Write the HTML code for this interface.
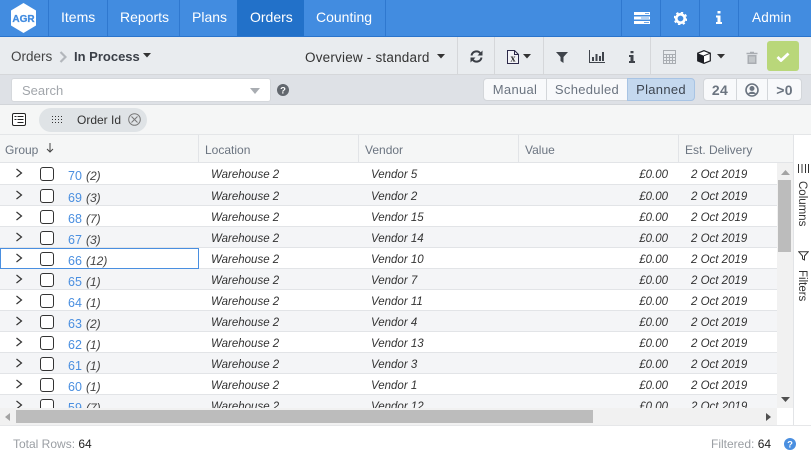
<!DOCTYPE html>
<html><head><meta charset="utf-8">
<style>
html,body{margin:0;padding:0}
body{width:811px;height:455px;overflow:hidden;position:relative;background:#fff;font-family:"Liberation Sans",sans-serif;color:#333}
.a,.t{position:absolute}
.t{white-space:nowrap}
.nav{color:#fff;font-size:14px;top:9px}
.sep{position:absolute;width:1px;background:#2f78cf;top:0;height:36px}
.tsep{position:absolute;width:1px;background:#d5d7da;top:37px;height:37px}
.hd{font-size:12px;color:#6b7480;top:143px}
.hsep{position:absolute;width:1px;background:#e2e4e7;top:135px;height:27px}
.row{position:absolute;left:0;width:777px;height:20px;border-bottom:1px solid #e2e4e7;overflow:hidden}
.row .t{font-size:11.5px;font-style:italic;top:6px;color:#333}
.row .id{font-style:normal;font-size:12.5px;color:#4a8fe0;left:68px;top:6px}
.row .ct{left:86px;top:6px;font-size:12px;color:#444}
.row .cb{position:absolute;left:40px;top:4px;width:12px;height:12px;border:1px solid #333;border-radius:3px;background:#fff}
.row svg{position:absolute;left:15px;top:5px}
.seg{position:absolute;top:78px;height:23px;background:#f8f9fb;border:1px solid #d3d6da;box-sizing:border-box;font-size:13px;color:#6b7480;text-align:center;line-height:22px;letter-spacing:.3px}
</style></head><body>

<div class="a" style="left:0;top:0;width:811px;height:36px;background:#428ce0"></div>
<div class="a" style="left:0;top:36px;width:811px;height:1px;background:#2a74cc"></div>
<div class="a" style="left:237px;top:0;width:67px;height:36px;background:#2271c9"></div>
<div class="sep" style="left:48px"></div><div class="sep" style="left:107px"></div><div class="sep" style="left:179px"></div><div class="sep" style="left:385px"></div>
<div class="sep" style="left:621px"></div><div class="sep" style="left:660px"></div><div class="sep" style="left:699px"></div><div class="sep" style="left:738px"></div>

<svg class="a" style="left:11px;top:3px" width="25" height="30" viewBox="0 0 25 30"><path d="M12.500 0 L25 7.500 V22.500 L12.500 30 L0 22.500 V7.500Z" fill="#fff"/><text x="12.500" y="18.800" font-family="Liberation Sans" font-size="10" font-weight="bold" fill="#428ce0" stroke="#428ce0" stroke-width=".3" text-anchor="middle">AGR</text></svg>
<div class="t nav" style="left:61px">Items</div>
<div class="t nav" style="left:120px">Reports</div>
<div class="t nav" style="left:192px">Plans</div>
<div class="t nav" style="left:250px">Orders</div>
<div class="t nav" style="left:316px">Counting</div>
<div class="t nav" style="left:752px;font-size:13.5px;top:10px;letter-spacing:.25px">Admin</div>
<svg class="a" style="left:634px;top:12px" width="16" height="12"><path d="M0 0h16v3H0zM0 4.500h16v3H0zM0 9h16v3H0z" fill="#fff"/><path d="M11 1.500h4M7 6h8M10 10.500h5" stroke="#428ce0" stroke-width=".8"/></svg>
<svg class="a" style="left:674px;top:12px" width="13" height="13" viewBox="0 0 13 13"><circle cx="6.500" cy="6.500" r="4.200" fill="none" stroke="#fff" stroke-width="2.600"/><circle cx="6.500" cy="6.500" r="6.100" fill="none" stroke="#fff" stroke-width="1.600" stroke-dasharray="2.400 2.400"/></svg>
<svg class="a" style="left:716px;top:11px" width="6" height="13"><path d="M1.500 0h3v2.500h-3zM0 4.500h4.500V11H6v2H0v-2h1.500V6.500H0z" fill="#fff"/></svg>

<div class="a" style="left:0;top:37px;width:811px;height:37px;background:#e9ecef;border-bottom:1px solid #d5d7da"></div>
<div class="t" style="left:11px;top:49px;font-size:13.5px;color:#444">Orders</div>
<svg class="a" style="left:59px;top:51px" width="8" height="12"><path d="M1.500 1l5 5-5 5" fill="none" stroke="#b3b7bc" stroke-width="2.200"/></svg>
<div class="t" style="left:74px;top:49px;font-size:13px;font-weight:bold;color:#3a3f47">In Process</div>
<svg class="a" style="left:143px;top:53px" width="8" height="5"><path d="M0 0h8L4 4.500z" fill="#333"/></svg>
<div class="t" style="left:305px;top:50px;font-size:13.5px;color:#333;letter-spacing:.2px">Overview - standard</div>
<svg class="a" style="left:437px;top:54px" width="8" height="5"><path d="M0 0h8L4 4.500z" fill="#333"/></svg>
<div class="tsep" style="left:457px"></div><div class="tsep" style="left:494px"></div><div class="tsep" style="left:543px"></div><div class="tsep" style="left:650px"></div>
<svg class="a" style="left:470px;top:50px" width="13" height="13" viewBox="0 0 13 13"><path d="M1.500 5.500A5 5 0 0 1 10.500 3.500M11.500 7.500A5 5 0 0 1 2.500 9.500" fill="none" stroke="#3b3f46" stroke-width="2"/><path d="M12.500 0.500v5h-5zM0.500 12.500v-5h5z" fill="#3b3f46"/></svg>
<svg class="a" style="left:507px;top:50px" width="12" height="14" viewBox="0 0 12 14"><path d="M.5.500h7l4 4v9h-11z" fill="#f3f3f6" stroke="#2d2a4a"/><path d="M7.500.500v4h4" fill="none" stroke="#2d2a4a"/><text x="6" y="11.500" font-family="Liberation Serif" font-size="10" font-weight="bold" fill="#333" text-anchor="middle">x</text></svg>
<svg class="a" style="left:523px;top:54px" width="8" height="5"><path d="M0 0h8L4 4.500z" fill="#333"/></svg>
<svg class="a" style="left:556px;top:52px" width="12" height="11"><path d="M0 0h12L7.500 5v6l-3-2V5z" fill="#3f444b"/></svg>
<svg class="a" style="left:589px;top:50px" width="16" height="13"><path d="M.5 0v12.500H16" fill="none" stroke="#3f444b"/><path d="M3 7h2v4H3zM6.500 4h2v7h-2zM10 6h2v5h-2zM13 2h2v9h-2z" fill="#3f444b"/></svg>
<svg class="a" style="left:629px;top:51px" width="6" height="12"><path d="M1.500 0h3v2.200h-3zM0 4h4.500v6H6v2H0v-2h1.500V6H0z" fill="#3f444b"/></svg>
<svg class="a" style="left:663px;top:50px" width="13" height="14"><path d="M.5.500h12v13H.5zM.5 4.500h12M.5 7.500h12M.5 10.500h12M3.500 4.500v9M6.500 4.500v9M9.500 4.500v9" fill="none" stroke="#a9adb2"/></svg>
<svg class="a" style="left:697px;top:50px" width="14" height="14" viewBox="0 0 14 14"><path d="M7 .7L13.300 3.200v7.600L7 13.300 .7 10.800V3.200z" fill="#fff" stroke="#1d1f24" stroke-width="1.200"/><path d="M.7 3.200L7 5.700v7.600L.7 10.800z" fill="#1d1f24"/><path d="M7 5.700L13.300 3.200" stroke="#1d1f24"/></svg>
<svg class="a" style="left:717px;top:54px" width="8" height="5"><path d="M0 0h8L4 4.500z" fill="#333"/></svg>
<svg class="a" style="left:746px;top:51px" width="12" height="13"><path d="M4 1.500h4M0.500 2.500h11" stroke="#a9adb2" stroke-width="1.500"/><path d="M1.500 4h9v9h-9z" fill="#a9adb2"/><path d="M4 5.500v6M6 5.500v6M8 5.500v6" stroke="#dcdee0"/></svg>
<div class="a" style="left:767px;top:41px;width:32px;height:30px;background:#b9d77a;border-radius:3px"></div>
<svg class="a" style="left:776px;top:52px" width="14" height="10"><path d="M1.500 5l3.500 3.500L12.500 1.500" fill="none" stroke="#fff" stroke-width="2.800"/></svg>

<div class="a" style="left:0;top:75px;width:811px;height:29px;background:#dee1e6;border-bottom:1px solid #d2d5d9"></div>
<div class="a" style="left:11px;top:78px;width:260px;height:24px;box-sizing:border-box;background:#fff;border:1px solid #d5d8dc;border-radius:3px"></div>
<div class="t" style="left:22px;top:83px;font-size:13px;color:#a2a6ab">Search</div>
<svg class="a" style="left:250px;top:88px" width="10" height="6"><path d="M0 0h10L5 6z" fill="#a9adb2"/></svg>
<svg class="a" style="left:277px;top:84px" width="12" height="12" viewBox="0 0 12 12"><circle cx="6" cy="6" r="6" fill="#62676e"/><text x="6" y="9.500" font-family="Liberation Sans" font-size="9.500" font-weight="bold" fill="#fff" text-anchor="middle">?</text></svg>
<div class="seg" style="left:483px;width:64px;border-radius:4px 0 0 4px">Manual</div>
<div class="seg" style="left:547px;width:81px;border-left:0">Scheduled</div>
<div class="seg" style="left:627px;width:68px;background:#c4d8ee;border-color:#a8c4e4;color:#3d4550;border-radius:0 4px 4px 0">Planned</div>
<div class="seg" style="left:703px;width:34px;border-radius:4px 0 0 4px;font-weight:bold;font-size:14px">24</div>
<div class="seg" style="left:736px;width:32px"></div>
<div class="seg" style="left:767px;width:35px;border-radius:0 4px 4px 0;font-weight:bold;font-size:14px">&gt;0</div>
<svg class="a" style="left:745px;top:83px" width="14" height="14" viewBox="0 0 14 14"><circle cx="7" cy="7" r="6" fill="none" stroke="#6b7480" stroke-width="1.600"/><circle cx="7" cy="5.500" r="2.500" fill="#6b7480"/><path d="M3 11c1-3 7-3 8 0z" fill="#6b7480"/></svg>

<div class="a" style="left:0;top:105px;width:811px;height:29px;background:#f5f6f6;border-bottom:1px solid #e4e6e8"></div>
<svg class="a" style="left:12px;top:113px" width="14" height="13"><rect x=".5" y=".5" width="13" height="12" rx="1.500" fill="#fff" stroke="#222"/><path d="M2.500 3.500h2M5.500 3.500h6M2.500 6.500h2M5.500 6.500h6M5.500 9.500h6" stroke="#222"/></svg>
<div class="a" style="left:39px;top:108px;width:108px;height:24px;background:#dfe3e6;border-radius:12px"></div>
<svg class="a" style="left:52px;top:116px" width="10" height="8"><path d="M0 .5h10M0 3.500h10M0 6.500h10" stroke="#333" stroke-dasharray="1 2"/></svg>
<div class="t" style="left:77px;top:113px;font-size:12px;color:#333">Order Id</div>
<svg class="a" style="left:128px;top:113px" width="13" height="13"><circle cx="6.500" cy="6.500" r="5.800" fill="none" stroke="#777"/><path d="M3.500 3.500l6 6M9.500 3.500l-6 6" stroke="#777"/></svg>

<div class="a" style="left:0;top:135px;width:793px;height:27px;background:#f5f6f6;border-bottom:1px solid #e2e4e7"></div>
<div class="hsep" style="left:198px"></div><div class="hsep" style="left:358px"></div><div class="hsep" style="left:518px"></div><div class="hsep" style="left:678px"></div>
<div class="t hd" style="left:5px">Group</div>
<svg class="a" style="left:46px;top:143px" width="8" height="10"><path d="M4 0v9M1 6l3 3 3-3" fill="none" stroke="#444"/></svg>
<div class="t hd" style="left:205px">Location</div>
<div class="t hd" style="left:365px">Vendor</div>
<div class="t hd" style="left:525px">Value</div>
<div class="t hd" style="left:685px">Est. Delivery</div>

<div class="a" style="left:0;top:163px;width:777px;height:245px;overflow:hidden">
<div class="row" style="top:0;height:21px;background:#fff"><svg width="8" height="10"><path d="M1.500 1l5 4-5 4" fill="none" stroke="#333" stroke-width="1.200"/></svg><div class="cb"></div><div class="t id">70</div><div class="t ct">(2)</div><div class="t" style="left:211px">Warehouse 2</div><div class="t" style="left:371px">Vendor 5</div><div class="t" style="right:109px">£0.00</div><div class="t" style="left:691px">2 Oct 2019</div></div>
<div class="row" style="top:22px;background:#f4f5f7"><svg width="8" height="10"><path d="M1.500 1l5 4-5 4" fill="none" stroke="#333" stroke-width="1.200"/></svg><div class="cb"></div><div class="t id">69</div><div class="t ct">(3)</div><div class="t" style="left:211px">Warehouse 2</div><div class="t" style="left:371px">Vendor 2</div><div class="t" style="right:109px">£0.00</div><div class="t" style="left:691px">2 Oct 2019</div></div>
<div class="row" style="top:43px;background:#fff"><svg width="8" height="10"><path d="M1.500 1l5 4-5 4" fill="none" stroke="#333" stroke-width="1.200"/></svg><div class="cb"></div><div class="t id">68</div><div class="t ct">(7)</div><div class="t" style="left:211px">Warehouse 2</div><div class="t" style="left:371px">Vendor 15</div><div class="t" style="right:109px">£0.00</div><div class="t" style="left:691px">2 Oct 2019</div></div>
<div class="row" style="top:64px;background:#f4f5f7"><svg width="8" height="10"><path d="M1.500 1l5 4-5 4" fill="none" stroke="#333" stroke-width="1.200"/></svg><div class="cb"></div><div class="t id">67</div><div class="t ct">(3)</div><div class="t" style="left:211px">Warehouse 2</div><div class="t" style="left:371px">Vendor 14</div><div class="t" style="right:109px">£0.00</div><div class="t" style="left:691px">2 Oct 2019</div></div>
<div class="row" style="top:85px;background:#fff"><svg width="8" height="10"><path d="M1.500 1l5 4-5 4" fill="none" stroke="#333" stroke-width="1.200"/></svg><div class="cb"></div><div class="t id">66</div><div class="t ct">(12)</div><div class="t" style="left:211px">Warehouse 2</div><div class="t" style="left:371px">Vendor 10</div><div class="t" style="right:109px">£0.00</div><div class="t" style="left:691px">2 Oct 2019</div></div>
<div class="row" style="top:106px;background:#f4f5f7"><svg width="8" height="10"><path d="M1.500 1l5 4-5 4" fill="none" stroke="#333" stroke-width="1.200"/></svg><div class="cb"></div><div class="t id">65</div><div class="t ct">(1)</div><div class="t" style="left:211px">Warehouse 2</div><div class="t" style="left:371px">Vendor 7</div><div class="t" style="right:109px">£0.00</div><div class="t" style="left:691px">2 Oct 2019</div></div>
<div class="row" style="top:127px;background:#fff"><svg width="8" height="10"><path d="M1.500 1l5 4-5 4" fill="none" stroke="#333" stroke-width="1.200"/></svg><div class="cb"></div><div class="t id">64</div><div class="t ct">(1)</div><div class="t" style="left:211px">Warehouse 2</div><div class="t" style="left:371px">Vendor 11</div><div class="t" style="right:109px">£0.00</div><div class="t" style="left:691px">2 Oct 2019</div></div>
<div class="row" style="top:148px;background:#f4f5f7"><svg width="8" height="10"><path d="M1.500 1l5 4-5 4" fill="none" stroke="#333" stroke-width="1.200"/></svg><div class="cb"></div><div class="t id">63</div><div class="t ct">(2)</div><div class="t" style="left:211px">Warehouse 2</div><div class="t" style="left:371px">Vendor 4</div><div class="t" style="right:109px">£0.00</div><div class="t" style="left:691px">2 Oct 2019</div></div>
<div class="row" style="top:169px;background:#fff"><svg width="8" height="10"><path d="M1.500 1l5 4-5 4" fill="none" stroke="#333" stroke-width="1.200"/></svg><div class="cb"></div><div class="t id">62</div><div class="t ct">(1)</div><div class="t" style="left:211px">Warehouse 2</div><div class="t" style="left:371px">Vendor 13</div><div class="t" style="right:109px">£0.00</div><div class="t" style="left:691px">2 Oct 2019</div></div>
<div class="row" style="top:190px;background:#f4f5f7"><svg width="8" height="10"><path d="M1.500 1l5 4-5 4" fill="none" stroke="#333" stroke-width="1.200"/></svg><div class="cb"></div><div class="t id">61</div><div class="t ct">(1)</div><div class="t" style="left:211px">Warehouse 2</div><div class="t" style="left:371px">Vendor 3</div><div class="t" style="right:109px">£0.00</div><div class="t" style="left:691px">2 Oct 2019</div></div>
<div class="row" style="top:211px;background:#fff"><svg width="8" height="10"><path d="M1.500 1l5 4-5 4" fill="none" stroke="#333" stroke-width="1.200"/></svg><div class="cb"></div><div class="t id">60</div><div class="t ct">(1)</div><div class="t" style="left:211px">Warehouse 2</div><div class="t" style="left:371px">Vendor 1</div><div class="t" style="right:109px">£0.00</div><div class="t" style="left:691px">2 Oct 2019</div></div>
<div class="row" style="top:232px;background:#f4f5f7"><svg width="8" height="10"><path d="M1.500 1l5 4-5 4" fill="none" stroke="#333" stroke-width="1.200"/></svg><div class="cb"></div><div class="t id">59</div><div class="t ct">(7)</div><div class="t" style="left:211px">Warehouse 2</div><div class="t" style="left:371px">Vendor 12</div><div class="t" style="right:109px">£0.00</div><div class="t" style="left:691px">2 Oct 2019</div></div>
</div>
<div class="a" style="left:0;top:248px;width:199px;height:21px;box-sizing:border-box;border:1px solid #4a8fe0"></div>

<div class="a" style="left:777px;top:163px;width:16px;height:245px;background:#f1f1f1"></div>
<div class="a" style="left:778px;top:180px;width:13px;height:72px;background:#bcbcbc"></div>
<svg class="a" style="left:781px;top:170px" width="9" height="5"><path d="M0 5h9L4.500 0z" fill="#a3a3a3"/></svg>
<svg class="a" style="left:781px;top:397px" width="9" height="5"><path d="M0 0h9L4.500 5z" fill="#505050"/></svg>
<div class="a" style="left:0;top:408px;width:777px;height:17px;background:#f1f1f1"></div>
<div class="a" style="left:16px;top:410px;width:577px;height:13px;background:#bcbcbc"></div>
<svg class="a" style="left:5px;top:413px" width="5" height="8"><path d="M5 0v8L0 4z" fill="#a3a3a3"/></svg>
<svg class="a" style="left:766px;top:413px" width="5" height="8"><path d="M0 0v8L5 4z" fill="#505050"/></svg>

<div class="a" style="left:793px;top:135px;width:1px;height:290px;background:#e2e4e7"></div>
<svg class="a" style="left:798px;top:164px" width="11" height="9"><path d="M.5 0v9M4 0v9M7.500 0v9M10.500 0v9" stroke="#333"/></svg>
<div class="t" style="left:796px;top:181px;font-size:11.500px;color:#333;writing-mode:vertical-rl">Columns</div>
<svg class="a" style="left:798px;top:251px" width="11" height="10"><path d="M.7.700h9.600L6.500 5v4L4.500 8V5z" fill="none" stroke="#333"/></svg>
<div class="t" style="left:796px;top:270px;font-size:11.500px;color:#333;writing-mode:vertical-rl">Filters</div>

<div class="a" style="left:0;top:425px;width:811px;height:1px;background:#e6e7e9"></div>
<div class="t" style="left:13px;top:437px;font-size:12px;color:#9a9ea3">Total Rows: <span style="color:#222">64</span></div>
<div class="t" style="left:711px;top:437px;font-size:12px;color:#9a9ea3">Filtered: <span style="color:#222">64</span></div>
<svg class="a" style="left:784px;top:438px" width="12" height="12" viewBox="0 0 12 12"><circle cx="6" cy="6" r="6" fill="#4a8fe0"/><text x="6" y="9.500" font-family="Liberation Sans" font-size="9.500" font-weight="bold" fill="#fff" text-anchor="middle">?</text></svg>

</body></html>
